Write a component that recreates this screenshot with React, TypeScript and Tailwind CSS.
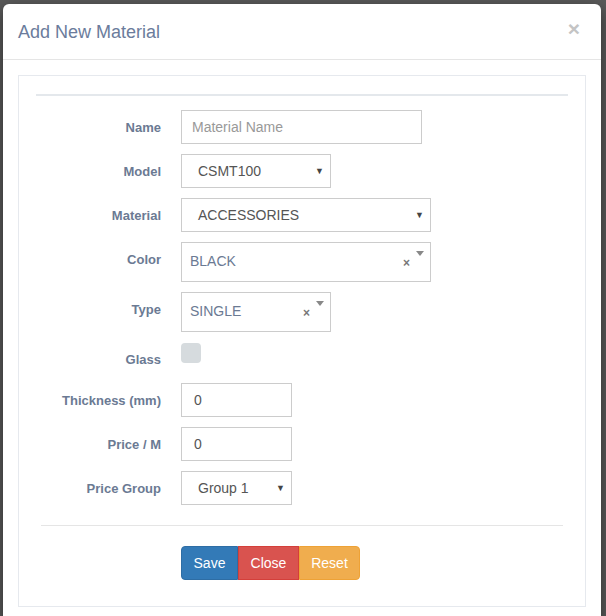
export default function App() {
  const label = "w-[125px] shrink-0 text-right font-bold text-[13px] text-[#6b7a93] pt-[8px] leading-[20px]";
  const input = "h-[34px] border border-[#cccccc] bg-white flex items-center text-[14px] text-[#555555]";
  const Arrow = () => <span className="text-[9px] text-[#444] leading-none">▼</span>;

  return (
    <div className="h-[616px] overflow-hidden bg-[#5a5a5a] pt-[4px] pl-[3px]" style={{ fontFamily: '"Liberation Sans", Arial, sans-serif' }}>
      <div className="w-[598px] bg-white rounded-[6px] shadow-[0_5px_15px_rgba(0,0,0,0.5)]">
        <div className="flex items-center justify-between px-[15px] h-[56px] border-b border-[#e5e5e5]">
          <h4 className="text-[18px] text-[#6b7c9c] leading-[26px]">Add New Material</h4>
          <span className="text-[21px] font-bold text-[#c4c4c4] leading-none mr-[6px] -mt-[6px]">×</span>
        </div>
        <div className="p-[15px]">
          <div className="border border-[#e6e9ee] px-[17px] pt-[18px] pb-[26px]">
            <div className="h-[2px] bg-[#e4e8ec]" />
            <div className="mt-[14px] flex flex-col gap-[10px]">
              <div className="flex gap-[20px]">
                <div className={label}>Name</div>
                <div className={`${input} w-[241px] px-[10px]`}>
                  <span className="text-[#999999]">Material Name</span>
                </div>
              </div>
              <div className="flex gap-[20px]">
                <div className={label}>Model</div>
                <div className={`${input} w-[150px] pl-[16px] pr-[6px] justify-between`}>
                  <span>CSMT100</span>
                  <Arrow />
                </div>
              </div>
              <div className="flex gap-[20px]">
                <div className={label}>Material</div>
                <div className={`${input} w-[250px] pl-[16px] pr-[6px] justify-between`}>
                  <span>ACCESSORIES</span>
                  <Arrow />
                </div>
              </div>
              <div className="flex gap-[20px]">
                <div className={label}>Color</div>
                <div className="h-[40px] w-[250px] border border-[#cccccc] relative flex items-center pl-[8px]">
                  <span className="text-[14px] text-[#6b7a93] -mt-[1px]">BLACK</span>
                  <span className="absolute right-[20px] top-[11px] text-[12px] font-bold text-[#777]">×</span>
                  <span className="absolute right-[6px] top-[8px] w-0 h-0 border-l-[4px] border-r-[4px] border-t-[5px] border-l-transparent border-r-transparent border-t-[#888]" />
                </div>
              </div>
              <div className="flex gap-[20px]">
                <div className={label}>Type</div>
                <div className="h-[40px] w-[150px] border border-[#cccccc] relative flex items-center pl-[8px]">
                  <span className="text-[14px] text-[#6b7a93] -mt-[1px]">SINGLE</span>
                  <span className="absolute right-[20px] top-[11px] text-[12px] font-bold text-[#777]">×</span>
                  <span className="absolute right-[6px] top-[8px] w-0 h-0 border-l-[4px] border-r-[4px] border-t-[5px] border-l-transparent border-r-transparent border-t-[#888]" />
                </div>
              </div>
              <div className="flex gap-[20px] h-[31px]">
                <div className={label}>Glass</div>
                <div className="w-[20px] h-[20px] rounded-[4px] bg-[#d6dbde] mt-[1px]" />
              </div>
              <div className="flex gap-[20px]">
                <div className={label}>Thickness (mm)</div>
                <div className={`${input} w-[111px] px-[12px]`}>0</div>
              </div>
              <div className="flex gap-[20px]">
                <div className={label}>Price / M</div>
                <div className={`${input} w-[111px] px-[12px]`}>0</div>
              </div>
              <div className="flex gap-[20px]">
                <div className={label}>Price Group</div>
                <div className={`${input} w-[111px] pl-[16px] pr-[6px] justify-between`}>
                  <span>Group 1</span>
                  <Arrow />
                </div>
              </div>
            </div>
            <div className="mx-[5px] mt-[20px] h-px bg-[#e5e5e5]" />
            <div className="mt-[20px] flex pl-[145px]">
              <button className="h-[34px] w-[57px] bg-[#337ab7] border border-[#2e6da4] text-white text-[14px] rounded-l-[4px]">Save</button>
              <button className="h-[34px] w-[61px] bg-[#d9534f] border border-[#d43f3a] text-white text-[14px]">Close</button>
              <button className="h-[34px] w-[61px] bg-[#f0ad4e] border border-[#eea236] text-white text-[14px] rounded-r-[4px]">Reset</button>
            </div>
          </div>
        </div>
      </div>
    </div>
  );
}
